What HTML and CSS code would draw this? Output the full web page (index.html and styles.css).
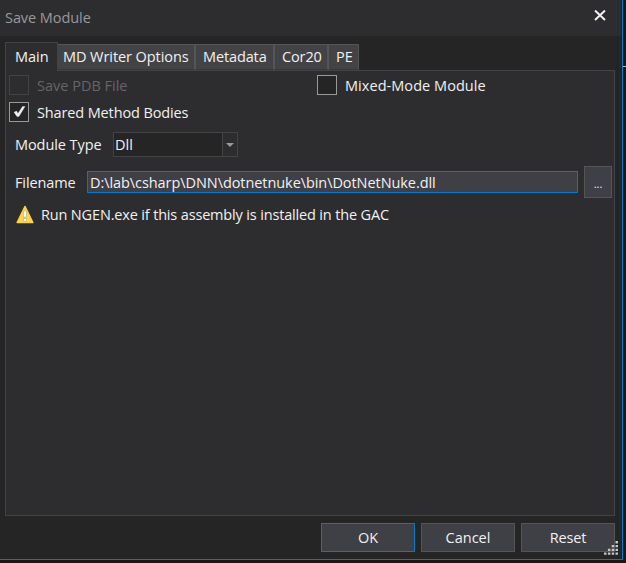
FILE: index.html
```
<!DOCTYPE html>
<html lang="en">
<head>
<meta charset="utf-8">
<title>Save Module</title>
<link rel="stylesheet" href="styles.css">
</head>
<body>
<div class="window">
  <header class="titlebar">
    <span class="t-title">Save Module</span>
    <svg class="close" width="12" height="11" viewBox="0 0 12 11"><path d="M1 .5 11 10M11 .5 1 10" stroke="#f1f1f1" stroke-width="2"/></svg>
  </header>
  <nav class="tabs">
    <div class="tab active"><span class="t-main">Main</span></div>
    <div class="tab tab-md"><span class="t-md">MD Writer Options</span></div>
    <div class="tab tab-meta"><span class="t-meta">Metadata</span></div>
    <div class="tab tab-cor"><span class="t-cor">Cor20</span></div>
    <div class="tab tab-pe"><span class="t-pe">PE</span></div>
  </nav>
  <main class="panel">
    <div class="checks">
      <label class="check disabled"><i class="box"></i><span class="t-pdb">Save PDB File</span></label>
      <label class="check"><i class="box"></i><span class="t-mixed">Mixed-Mode Module</span></label>
      <label class="check"><i class="box"><svg width="18" height="18" viewBox="0 0 18 18"><path d="M4 9.200 6.500 8 8 10.500 12.500 3.500H15L8.900 13.600H7Z" fill="#f1f1f1" stroke="#f1f1f1" stroke-width=".3"/></svg></i><span class="t-shared">Shared Method Bodies</span></label>
    </div>
    <div class="row type-row">
      <span class="type-label"><span class="t-type">Module Type</span></span>
      <div class="combo"><span class="combo-value"><span class="t-dll">Dll</span></span><span class="combo-arrow"></span></div>
    </div>
    <div class="row file-row">
      <span class="file-label"><span class="t-file">Filename</span></span>
      <div class="input"><span class="t-path">D:\lab\csharp\DNN\dotnetnuke\bin\DotNetNuke.dll</span></div>
      <div class="browse">...</div>
    </div>
    <div class="row warning">
      <svg width="18" height="19" viewBox="0 0 18 19"><path d="M9 1.500 16.800 17.500H1.200Z" fill="#fdd64b" stroke="#fdd24a" stroke-width="1.600" stroke-linejoin="round"/><path d="M7.500 6h3v6h-3zM7.500 13.500h3v3h-3z" fill="#fff" stroke="#b5a878" stroke-width=".6"/></svg>
      <span class="t-warn">Run NGEN.exe if this assembly is installed in the GAC</span>
    </div>
  </main>
  <footer class="actions">
    <div class="button primary"><span class="t-ok">OK</span></div>
    <div class="button"><span class="t-cancel">Cancel</span></div>
    <div class="button"><span class="t-reset">Reset</span></div>
  </footer>
  <svg class="grip" width="14" height="14" viewBox="0 0 14 14" fill="#c5c5c5"><path d="M11.500 0h2.500v2.500h-2.500zM7.700 4h2.500v2.300H7.700zM11.500 4h2.500v2.300h-2.500zM3.900 7.700h2.500v2.300H3.900zM7.700 7.700h2.500v2.300H7.700zM11.500 7.700h2.500v2.300h-2.500zM0 11.500h2.500v2.300H0zM3.900 11.500h2.500v2.300H3.900zM7.700 11.500h2.500v2.300H7.700zM11.500 11.500h2.500v2.300h-2.500z"/></svg>
</div>
<div class="backdrop-line"></div>
</body>
</html>
```
FILE: styles.css
```
* { box-sizing: border-box; }
body {
  margin: 0;
  width: 626px;
  height: 563px;
  display: flex;
  overflow: hidden;
  background: #191717;
  color: #f1f1f1;
  font: 14.5px/22px "Open Sans", "Noto Sans", sans-serif;
  white-space: nowrap;
}
.window {
  position: relative;
  width: 623px;
  height: 560px;
  display: flex;
  flex-direction: column;
  background: #252526;
  border-right: 1px solid #007acc;
  border-bottom: 1px solid #007acc;
}
.backdrop-line { width: 3px; height: 1px; margin-top: 66px; background: #b8b8b8; }
.titlebar {
  height: 36px;
  margin-right: 1px;
  padding: 0 15px 0 5px;
  display: flex;
  justify-content: space-between;
  background: #2d2d30;
  color: #999;
}
.titlebar span { margin-top: 7px; }
.close { margin-top: 10px; }
.tabs {
  position: relative;
  z-index: 1;
  height: 28px;
  margin: 6px 0 0 5px;
  display: flex;
  align-items: flex-start;
}
.tab {
  height: 26px;
  margin-top: 2px;
  padding: 1px 0 0 7px;
  background: #434346;
  border: 1px solid #555558;
  border-left: 0;
  border-bottom-color: #38383a;
}
.tab.active {
  width: 53px;
  height: 29px;
  margin-top: 0;
  padding: 3px 0 0 9px;
  background: #2d2d30;
  border: 1px solid #434346;
  border-bottom: 0;
}
.tab-md { width: 138px; padding-left: 5px; border-right-width: 2px; }
.tab-meta { width: 79px; border-right-width: 2px; }
.tab-cor { width: 54px; border-right-width: 2px; }
.tab-pe { width: 30px; }
.panel {
  width: 610px;
  height: 446px;
  margin-left: 5px;
  padding: 4px 2px 0 3px;
  background: #2d2d30;
  border: 1px solid #434346;
}
.checks { display: grid; grid-template-columns: 308px 1fr; row-gap: 7px; }
.check { display: flex; gap: 8px; height: 20px; }
.box { width: 20px; height: 20px; border: 1px solid #999; background: #252526; }
.box svg { display: block; }
.disabled { color: #656565; }
.disabled .box { border-color: #434346; background: #2d2d30; }
.row { display: flex; }
.type-row { height: 25px; margin-top: 10px; padding-left: 6px; }
.type-label { width: 98px; padding-top: 2px; }
.combo { width: 125px; display: flex; background: #252526; border: 1px solid #434346; }
.combo-value { width: 109px; padding: 1px 0 0 1px; border-right: 1px solid #434346; }
.combo-arrow { flex: 1; display: flex; align-items: center; justify-content: center; background: #2d2d30; }
.combo-arrow::before { content: ""; border: 4px solid transparent; border-top-color: #999; border-bottom: 0; }
.file-row { height: 32px; margin-top: 9px; padding-left: 6px; }
.file-label { width: 72px; padding-top: 6px; }
.input { width: 491px; height: 22px; margin-top: 5px; padding: 0 2px; background: #3f3f46; border: 1px solid #007acc; }
.browse { width: 28px; margin-left: 6px; padding-top: 6px; text-align: center; font-size: 11px; background: #3f3f46; border: 1px solid #555; }
.warning { margin-top: 6px; padding-left: 7px; gap: 7px; }
.warning svg { margin-top: 1px; }
.actions { display: flex; gap: 6px; margin: 7px 0 0 321px; }
.button { width: 94px; height: 29px; padding-top: 3px; text-align: center; background: #3f3f46; border: 1px solid #555; }
.primary { border-color: #007acc; }
.grip { position: absolute; left: 604px; top: 541px; }
.t-title, .t-md, .t-type, .t-path { letter-spacing: -.07px; }
.t-shared { letter-spacing: -.13px; }
.t-warn { letter-spacing: -.16px; }
.t-meta, .t-file, .t-cor, .t-reset { letter-spacing: -.12px; }
.t-mixed { letter-spacing: .05px; }
```
